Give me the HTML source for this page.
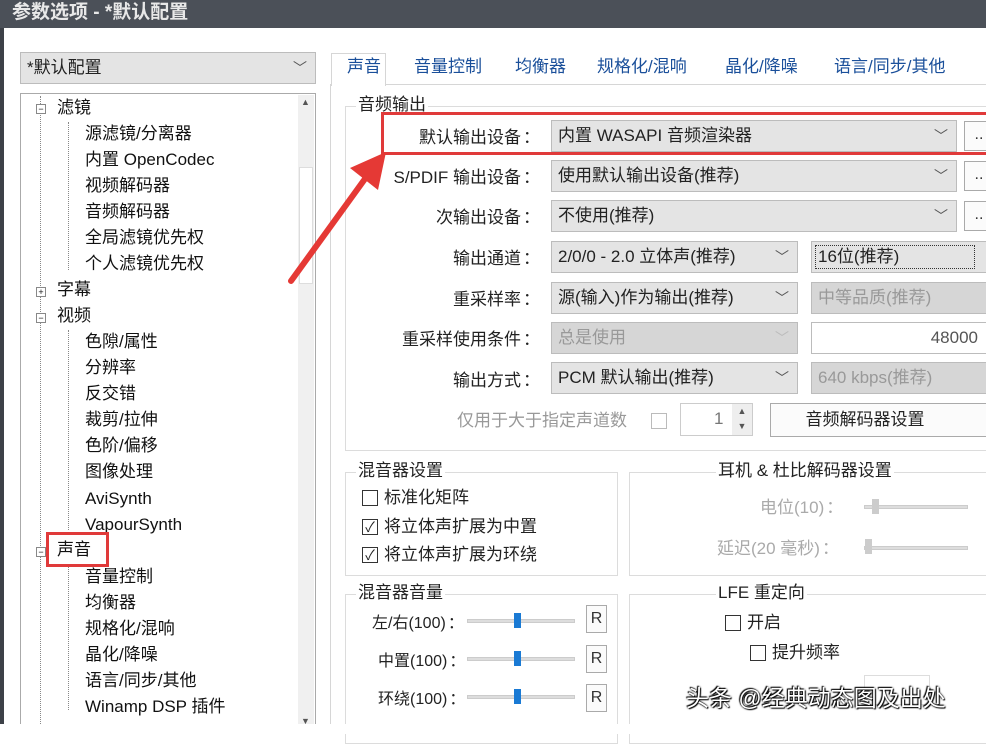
<!DOCTYPE html><html><head><meta charset="utf-8"><style>
*{margin:0;padding:0;box-sizing:border-box}
body{width:986px;height:734px;overflow:hidden;background:#fff;font-family:"Liberation Sans","Noto Sans CJK SC",sans-serif;color:#222;position:relative}
.a{position:absolute;white-space:nowrap}
.t{font-size:17px;line-height:20px}
.cb{position:absolute;background:#e4e4e4;border:1px solid #bcbcbc;font-size:17px;line-height:30px;padding-left:6px}
.cb.d{background:#d6d6d6;color:#999}
.cb .v{position:absolute;right:8px;top:0;color:#555;font-size:14px}
.lbl{position:absolute;font-size:17px;text-align:right;width:220px;line-height:20px;white-space:nowrap}
.c{font-family:"Noto Sans CJK SC",sans-serif;margin-left:2px}
.grp{position:absolute;border:1px solid #dcdcdc}
.gt{position:absolute;background:#fff;font-size:17px;line-height:20px;padding:0 2px}
.chk{position:absolute;width:16px;height:16px;border:1px solid #333;background:#fff;font-size:14px;line-height:14px;text-align:center}
.sl{position:absolute;height:4px;background:#ddd;border:1px solid #ccc}
.th{position:absolute;width:7px;height:15px;background:#1a7ad4}
.rb{position:absolute;width:21px;height:28px;border:1px solid #aaa;background:#fbfbfb;font-size:16px;text-align:center;line-height:26px;color:#333}
.tree div{position:absolute;font-size:17px;line-height:20px;color:#111}
</style></head><body>
<div class="a" style="left:0;top:0;width:986px;height:28px;background:#4b5058"></div>
<div class="a" style="left:12px;top:2px;color:#e8e8e8;font-size:19px;line-height:22px;font-weight:bold">参数选项 - *默认配置</div>
<div class="a" style="left:0;top:28px;width:4px;height:706px;background:#3d4148"></div>

<div class="cb" style="left:20px;top:52px;width:296px;height:32px">*默认配置<span class="v">﹀</span></div>
<div class="a" style="left:20px;top:93px;width:296px;height:641px;border:1px solid #aaa;background:#fff"></div>
<div class="a" style="left:298px;top:95px;width:16px;height:636px;background:#f0f0f0"></div>
<div class="a" style="left:299px;top:167px;width:14px;height:117px;background:#fff;border:1px solid #ddd"></div>
<div class="a" style="left:301px;top:97px;font-size:9px;color:#555">▲</div>
<div class="a" style="left:301px;top:716px;font-size:9px;color:#555">▼</div>
<div class="a" style="left:40px;top:96px;width:0;height:638px;border-left:1px dotted #888"></div>
<div class="a" style="left:68px;top:122px;width:0;height:148px;border-left:1px dotted #888"></div>
<div class="a" style="left:68px;top:330px;width:0;height:200px;border-left:1px dotted #888"></div>
<div class="a" style="left:68px;top:565px;width:0;height:145px;border-left:1px dotted #888"></div>
<div class="tree">
<div style="left:36px;top:104px;width:10px;height:10px;border:1px solid #888;background:#fff;font-size:9px;line-height:8px;text-align:center">−</div>
<div style="left:57px;top:98px">滤镜</div>
<div style="left:85px;top:124px">源滤镜/分离器</div>
<div style="left:85px;top:150px">内置 OpenCodec</div>
<div style="left:85px;top:176px">视频解码器</div>
<div style="left:85px;top:202px">音频解码器</div>
<div style="left:85px;top:228px">全局滤镜优先权</div>
<div style="left:85px;top:254px">个人滤镜优先权</div>
<div style="left:36px;top:287px;width:10px;height:10px;border:1px solid #888;background:#fff;font-size:9px;line-height:8px;text-align:center">+</div>
<div style="left:57px;top:280px">字幕</div>
<div style="left:36px;top:313px;width:10px;height:10px;border:1px solid #888;background:#fff;font-size:9px;line-height:8px;text-align:center">−</div>
<div style="left:57px;top:306px">视频</div>
<div style="left:85px;top:332px">色隙/属性</div>
<div style="left:85px;top:358px">分辨率</div>
<div style="left:85px;top:384px">反交错</div>
<div style="left:85px;top:410px">裁剪/拉伸</div>
<div style="left:85px;top:436px">色阶/偏移</div>
<div style="left:85px;top:462px">图像处理</div>
<div style="left:85px;top:489px">AviSynth</div>
<div style="left:85px;top:515px">VapourSynth</div>
<div style="left:36px;top:547px;width:10px;height:10px;border:1px solid #888;background:#fff;font-size:9px;line-height:8px;text-align:center">−</div>
<div style="left:57px;top:540px">声音</div>
<div style="left:46px;top:532px;width:63px;height:35px;border:3px solid #e03a3a"></div>
<div style="left:85px;top:567px">音量控制</div>
<div style="left:85px;top:593px">均衡器</div>
<div style="left:85px;top:619px">规格化/混响</div>
<div style="left:85px;top:645px">晶化/降噪</div>
<div style="left:85px;top:671px">语言/同步/其他</div>
<div style="left:85px;top:697px">Winamp DSP 插件</div>
</div>

<div class="a" style="left:330px;top:84px;width:660px;height:650px;border:1px solid #d6d6d6;background:#fff"></div>
<div class="a" style="left:331px;top:53px;width:55px;height:33px;border:1px solid #d6d6d6;border-bottom:none;background:#fff"></div>
<div class="a t" style="left:347px;top:57px;color:#1a4f9a">声音</div>
<div class="a t" style="left:414px;top:57px;color:#1a4f9a">音量控制</div>
<div class="a t" style="left:515px;top:57px;color:#1a4f9a">均衡器</div>
<div class="a t" style="left:597px;top:57px;color:#1a4f9a">规格化/混响</div>
<div class="a t" style="left:725px;top:57px;color:#1a4f9a">晶化/降噪</div>
<div class="a t" style="left:834px;top:57px;color:#1a4f9a">语言/同步/其他</div>

<div class="grp" style="left:345px;top:106px;width:650px;height:345px"></div>
<div class="gt" style="left:356px;top:95px">音频输出</div>

<div class="lbl" style="left:320px;top:126px">默认输出设备<span class="c">：</span></div>
<div class="lbl" style="left:320px;top:166px">S/PDIF 输出设备<span class="c">：</span></div>
<div class="lbl" style="left:320px;top:206px">次输出设备<span class="c">：</span></div>
<div class="lbl" style="left:320px;top:247px">输出通道<span class="c">：</span></div>
<div class="lbl" style="left:320px;top:288px">重采样率<span class="c">：</span></div>
<div class="lbl" style="left:320px;top:328px">重采样使用条件<span class="c">：</span></div>
<div class="lbl" style="left:320px;top:369px">输出方式<span class="c">：</span></div>

<div class="cb" style="left:551px;top:120px;width:406px;height:32px">内置 WASAPI 音频渲染器<span class="v">﹀</span></div>
<div class="cb" style="left:551px;top:160px;width:406px;height:32px">使用默认输出设备(推荐)<span class="v">﹀</span></div>
<div class="cb" style="left:551px;top:200px;width:406px;height:32px">不使用(推荐)<span class="v">﹀</span></div>
<div class="rb" style="left:964px;top:121px;width:30px;height:30px">..</div>
<div class="rb" style="left:964px;top:161px;width:30px;height:30px">..</div>
<div class="rb" style="left:964px;top:201px;width:30px;height:30px">..</div>
<div class="cb" style="left:551px;top:241px;width:247px;height:32px">2/0/0 - 2.0 立体声(推荐)<span class="v">﹀</span></div>
<div class="cb" style="left:811px;top:241px;width:180px;height:32px">16位(推荐)</div>
<div class="a" style="left:815px;top:245px;width:160px;height:24px;border:1px dotted #333"></div>
<div class="cb" style="left:551px;top:282px;width:247px;height:32px">源(输入)作为输出(推荐)<span class="v">﹀</span></div>
<div class="cb d" style="left:811px;top:282px;width:180px;height:32px">中等品质(推荐)</div>
<div class="cb d" style="left:551px;top:322px;width:247px;height:32px">总是使用<span class="v" style="color:#bbb">﹀</span></div>
<div class="cb" style="left:811px;top:322px;width:180px;height:32px;background:#fff;text-align:right;padding-right:12px;color:#555">48000</div>
<div class="cb" style="left:551px;top:362px;width:247px;height:32px">PCM 默认输出(推荐)<span class="v">﹀</span></div>
<div class="cb d" style="left:811px;top:362px;width:180px;height:32px">640 kbps(推荐)</div>

<div class="a t" style="left:457px;top:411px;color:#999">仅用于大于指定声道数</div>
<div class="chk" style="left:651px;top:413px;border-color:#bbb"></div>
<div class="a" style="left:680px;top:403px;width:73px;height:33px;border:1px solid #ccc;background:#fff"></div>
<div class="a t" style="left:714px;top:409px;color:#777">1</div>
<div class="a" style="left:732px;top:404px;width:20px;height:31px;background:#eee;font-size:9px;line-height:15px;text-align:center;color:#555">▲<br>▼</div>
<div class="a" style="left:770px;top:403px;width:220px;height:34px;border:1px solid #aaa;background:#fbfbfb;font-size:17px;line-height:32px;text-align:center;padding-right:30px">音频解码器设置</div>

<div class="a" style="left:381px;top:112px;width:610px;height:43px;border:3px solid #e03a3a"></div>
<svg class="a" style="left:0;top:0" width="986" height="734"><path d="M291 281 L375 165" stroke="#e53935" stroke-width="6" stroke-linecap="round"/><path d="M386 152 L350 168 L378 190 Z" fill="#e53935"/></svg>

<div class="grp" style="left:345px;top:472px;width:273px;height:104px"></div>
<div class="gt" style="left:356px;top:461px">混音器设置</div>
<div class="chk" style="left:362px;top:490px"></div><div class="a t" style="left:384px;top:488px">标准化矩阵</div>
<div class="chk" style="left:362px;top:519px">✓</div><div class="a t" style="left:384px;top:517px">将立体声扩展为中置</div>
<div class="chk" style="left:362px;top:547px">✓</div><div class="a t" style="left:384px;top:545px">将立体声扩展为环绕</div>

<div class="grp" style="left:629px;top:472px;width:370px;height:104px"></div>
<div class="gt" style="left:716px;top:461px">耳机 &amp; 杜比解码器设置</div>
<div class="a t" style="left:760px;top:496px;color:#aaa">电位(10)<span class="c">：</span></div>
<div class="sl" style="left:864px;top:505px;width:104px"></div><div class="th" style="left:872px;top:499px;background:#ccc"></div>
<div class="a t" style="left:717px;top:537px;color:#aaa">延迟(20 毫秒)<span class="c">：</span></div>
<div class="sl" style="left:864px;top:546px;width:104px"></div><div class="th" style="left:865px;top:539px;background:#ccc"></div>

<div class="grp" style="left:345px;top:594px;width:273px;height:150px"></div>
<div class="gt" style="left:356px;top:583px">混音器音量</div>
<div class="a" style="left:372px;top:611px;font-size:16px;line-height:20px">左/右(100)<span class="c">：</span></div>
<div class="a" style="left:378px;top:649px;font-size:16px;line-height:20px">中置(100)<span class="c">：</span></div>
<div class="a" style="left:378px;top:687px;font-size:16px;line-height:20px">环绕(100)<span class="c">：</span></div>
<div class="sl" style="left:467px;top:619px;width:108px"></div><div class="th" style="left:514px;top:613px"></div>
<div class="sl" style="left:467px;top:657px;width:108px"></div><div class="th" style="left:514px;top:651px"></div>
<div class="sl" style="left:467px;top:695px;width:108px"></div><div class="th" style="left:514px;top:689px"></div>
<div class="rb" style="left:586px;top:605px">R</div>
<div class="rb" style="left:586px;top:645px">R</div>
<div class="rb" style="left:586px;top:684px">R</div>

<div class="grp" style="left:629px;top:594px;width:370px;height:150px"></div>
<div class="gt" style="left:716px;top:583px">LFE 重定向</div>
<div class="chk" style="left:725px;top:615px"></div><div class="a t" style="left:747px;top:613px">开启</div>
<div class="chk" style="left:750px;top:645px"></div><div class="a t" style="left:772px;top:643px">提升频率</div>
<div class="a" style="left:864px;top:675px;width:66px;height:30px;border:1px solid #ddd"></div>

<div class="a" style="left:0;top:724px;width:986px;height:10px;background:#fff"></div>
<div class="a" style="left:686px;top:684px;font-size:23px;line-height:28px;color:#fff;text-shadow:0 0 2px #000,1px 1px 1px #000,-1px -1px 1px #000">头条 @经典动态图及出处</div>
</body></html>
